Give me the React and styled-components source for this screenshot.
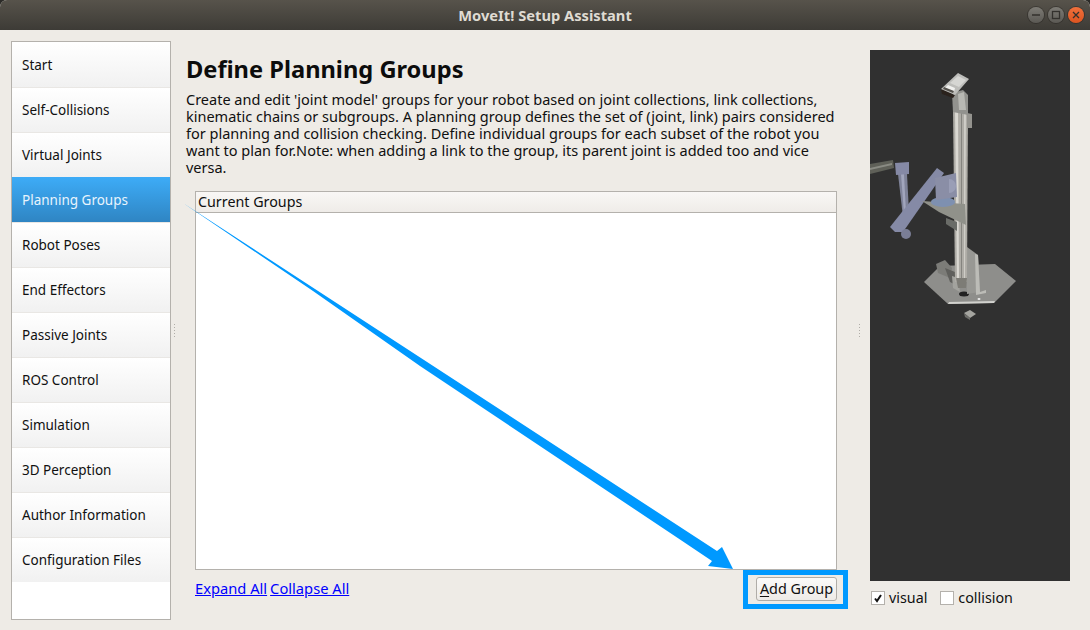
import styled, { createGlobalStyle } from "styled-components";

const GlobalStyle = createGlobalStyle`
    html, body {
        margin: 0;
        padding: 0;
        background: #2c2b28;
    }
`;

const Window = styled.div`
    position: relative;
    display: flex;
    flex-direction: column;
    width: 1090px;
    height: 630px;
    overflow: hidden;
    background: #eeebe6;
    border-radius: 7px 7px 0 0;
    font-family: "Noto Sans", sans-serif;
    font-size: 14px;
    color: #101010;
`;

const TitleBar = styled.div`
    position: relative;
    display: flex;
    flex: 0 0 30px;
    align-items: center;
    justify-content: center;
    background: linear-gradient(#57534b, #3d3b36);
    color: #dfdbd2;
    font-weight: 700;
    font-size: 14.7px;
`;

const WindowButtons = styled.div`
    position: absolute;
    top: 7px;
    right: 6px;
    display: flex;
    gap: 4px;
`;

const WindowButton = styled.div`
    display: flex;
    align-items: center;
    justify-content: center;
    width: 16px;
    height: 16px;
    border-radius: 50%;
    background: ${(p) => (p.$close ? "linear-gradient(#f0703c, #dc5420)" : "linear-gradient(#7d7b75, #5b5954)")};
    box-shadow: 0 0 0 1px rgba(40, 38, 34, 0.5);
    & svg {
        width: 10px;
        height: 10px;
        stroke: #33312d;
        stroke-width: 1.3;
        fill: none;
    }
`;

const Body = styled.div`
    display: flex;
    flex: 1;
    padding: 11px 20px 10px 11px;
    min-height: 0;
`;

const Sidebar = styled.div`
    display: flex;
    flex-direction: column;
    flex: 0 0 158px;
    background: #fff;
    border: 1px solid #b4b1ac;
`;

const NavItem = styled.div`
    display: flex;
    flex: 0 0 45px;
    box-sizing: border-box;
    align-items: center;
    padding-left: 10px;
    font-size: 13.5px;
    background: ${(p) => (p.$active ? "linear-gradient(#3dabf6, #2f85c3)" : "linear-gradient(#fff, #f1f1f1)")};
    color: ${(p) => (p.$active ? "#e8f4fd" : "#101010")};
    border-top: 1px solid ${(p) => (p.$active ? "#3dabf6" : p.$first ? "#fff" : "#e9e7e4")};
`;

const Splitter = styled.div`
    display: flex;
    flex: 0 0 ${(p) => p.$width}px;
    box-sizing: border-box;
    align-items: center;
    padding-left: ${(p) => p.$offset}px;
    &::after {
        content: "";
        width: 1px;
        height: 14px;
        background: repeating-linear-gradient(#b0ada8 0 1px, transparent 1px 3px);
    }
`;

const Main = styled.div`
    display: flex;
    flex-direction: column;
    flex: 0 0 666px;
    min-width: 0;
`;

const Heading = styled.h1`
    margin: 12px 0 5px;
    font-size: 23.65px;
    line-height: 33px;
    font-weight: 700;
    color: #0c0c0c;
`;

const Description = styled.p`
    margin: 0;
    width: 650px;
    font-size: 14.5px;
    line-height: 17px;
`;

const GroupsTable = styled.div`
    display: flex;
    flex-direction: column;
    flex: 1;
    margin: 15px 15px 0 9px;
    border: 1px solid #b4b1ac;
    background: #fff;
`;

const TableHeader = styled.div`
    flex: 0 0 21px;
    box-sizing: border-box;
    padding-left: 2px;
    font-size: 14.3px;
    line-height: 20px;
    background: linear-gradient(#f9f7f5, #efece8);
    border-bottom: 1px solid #b4b1ac;
`;

const Footer = styled.div`
    display: flex;
    flex: 0 0 50px;
    align-items: flex-start;
    justify-content: space-between;
    margin: 0 15px 0 9px;
    padding-top: 7px;
    box-sizing: border-box;
`;

const LinkRow = styled.div`
    display: flex;
    gap: 3px;
    padding-top: 1px;
    font-size: 14.7px;
    line-height: 20px;
`;

const TextLink = styled.a`
    color: #0000ff;
    text-decoration: underline;
`;

const AddButton = styled.button`
    position: relative;
    width: 81px;
    height: 24px;
    padding: 0;
    font: inherit;
    font-size: 14.4px;
    line-height: 20px;
    color: #101010;
    background: linear-gradient(#fbfaf9, #eeebe7);
    border: 1px solid #b0ada8;
    border-radius: 3px;
    &::after {
        content: "";
        position: absolute;
        top: -8px;
        bottom: -9px;
        left: -14px;
        right: -12px;
        border: 5px solid #0099ff;
    }
    & u {
        text-underline-offset: 2px;
    }
`;

const ViewerPanel = styled.div`
    display: flex;
    flex-direction: column;
    flex: 0 0 200px;
    padding-top: 9px;
`;

const Viewer = styled.div`
    flex: 0 0 531px;
    background: #303030;
    & svg {
        display: block;
    }
`;

const ViewOptions = styled.div`
    display: flex;
    align-items: center;
    margin-top: 10px;
    padding-left: 1px;
    font-size: 14.3px;
    line-height: 14px;
`;

const Option = styled.label`
    display: flex;
    align-items: center;
    gap: 4px;
    margin-right: 13px;
`;

const CheckBox = styled.span`
    display: flex;
    align-items: center;
    justify-content: center;
    box-sizing: border-box;
    width: 14px;
    height: 14px;
    background: #fff;
    border: 1px solid #b4b1ac;
    & svg {
        width: 10px;
        height: 10px;
        stroke: #111;
        stroke-width: 2;
        fill: none;
    }
`;

const ArrowOverlay = styled.svg`
    position: absolute;
    left: 0;
    top: 0;
    pointer-events: none;
`;

const navItems = [
    "Start", "Self-Collisions", "Virtual Joints", "Planning Groups", "Robot Poses", "End Effectors",
    "Passive Joints", "ROS Control", "Simulation", "3D Perception", "Author Information", "Configuration Files",
];

// robot model in the 3D view, in page coordinates
const RobotDrawing = () => (
    <svg width="200" height="531" viewBox="870 50 200 531">
        <defs>
            <filter id="soft" x="-5%" y="-5%" width="110%" height="110%">
                <feGaussianBlur stdDeviation="0.45" />
            </filter>
        </defs>
        <g filter="url(#soft)">
            {/* base plate */}
            <polygon points="924,282 940,266 995,264 1016,281 994,303 948,304" fill="#8e8e8b" />
            <polygon points="948,304 994,303 995,301 949,302" fill="#d2d2ce" />
            <ellipse cx="964" cy="294" rx="5" ry="2.5" fill="#232220" />
            <ellipse cx="979" cy="299" rx="1.5" ry="1" fill="#eee" />
            {/* motor */}
            <polygon points="936,264 945,260 952,268 950,278 938,273" fill="#7c7c78" />
            <polygon points="945,268 955,272 956,285 950,282" fill="#5f5f5b" />
            <polygon points="952,276 958,278 960,292 953,288" fill="#a3a39e" />
            {/* gusset */}
            <polygon points="967,247 978,255 980,292 967,294" fill="#989894" />
            <polygon points="975,254 978,255 980,292 986,290 986,293 976,295" fill="#bcbcb7" />
            {/* column */}
            <polygon points="953,108 968,108 967,282 955,282" fill="#aeaca6" />
            <polygon points="955,108 958,108 959,282 957,282" fill="#dad8d2" />
            <polygon points="961,108 962,108 962,282 961,282" fill="#85847f" />
            <polygon points="964,108 966,108 965,282 964,282" fill="#cfcdc7" />
            <polygon points="956,278 967,278 966,288 958,288" fill="#7d7c76" />
            <polygon points="967,113 972,114 972,128 967,128" fill="#94938e" />
            {/* head bracket and camera */}
            <polygon points="952,93 963,90 968,95 968,115 953,112" fill="#92928e" />
            <polygon points="958,94 964,92 966,110 959,110" fill="#b8b8b3" />
            <polygon points="941,89 955,95 953,98 942,94" fill="#2a211c" />
            <polygon points="958,73 969,79 955,95 941,89" fill="#bdbdba" />
            <polygon points="948,85 955,88 954,92 945,88" fill="#f1f1ef" />
            <polygon points="958,76 966,80 959,87 950,83" fill="#d6d6d3" />
            <polygon points="944,87 954,91 953,93 943,89" fill="#55524e" />
            {/* arm */}
            <polygon points="870,164 893,160 894,168 870,174" fill="#5e6059" />
            <polygon points="870,168 892,163 892,165 870,170" fill="#8a8b83" />
            <polygon points="898,174 907,174 909,213 903,217" fill="#7f8399" />
            <polygon points="901,174 904,174 906,213 904,214" fill="#a1a5bc" />
            <polygon points="895,163 909,162 909,174 896,175" fill="#8589a5" />
            <polygon points="937,168 944,173 903,232 895,232 890,227" fill="#858aa6" />
            <circle cx="906" cy="234" r="5" fill="#7a7e96" />
            {/* shelf and shoulder */}
            <polygon points="946,218 957,222 957,231 946,224" fill="#6b6c68" />
            <polygon points="922,201 965,204 966,225 939,212" fill="#90918a" />
            <ellipse cx="943" cy="202" rx="12" ry="5" fill="#7e90b0" />
            <polygon points="935,178 956,173 957,197 936,200" fill="#8a8ea6" />
            <path d="M949 179a7 7 0 0 1 0 14z" fill="#9a9eb6" />
            {/* loose part on the floor */}
            <polygon points="964,313 970,310 976,314 970,318" fill="#a5a5a0" />
            <polygon points="964,313 970,318 970,320 965,317" fill="#6e6e6a" />
        </g>
    </svg>
);

const App = () => {
    return (
        <Window>
            <GlobalStyle />
            <TitleBar>
                MoveIt! Setup Assistant
                <WindowButtons>
                    <WindowButton>
                        <svg viewBox="0 0 10 10"><path d="M1 5h8" /></svg>
                    </WindowButton>
                    <WindowButton>
                        <svg viewBox="0 0 10 10"><rect x="1.5" y="1.5" width="7" height="7" /></svg>
                    </WindowButton>
                    <WindowButton $close>
                        <svg viewBox="0 0 10 10"><path d="M2 2l6 6M8 2l-6 6" /></svg>
                    </WindowButton>
                </WindowButtons>
            </TitleBar>
            <Body>
                <Sidebar>
                    {navItems.map((item, i) => (
                        <NavItem key={item} $first={i === 0} $active={item === "Planning Groups"}>{item}</NavItem>
                    ))}
                </Sidebar>
                <Splitter $width={15} $offset={3} />
                <Main>
                    <Heading>Define Planning Groups</Heading>
                    <Description>
                        Create and edit 'joint model' groups for your robot based on joint collections, link collections,
                        kinematic chains or subgroups. A planning group defines the set of (joint, link) pairs considered
                        for planning and collision checking. Define individual groups for each subset of the robot you
                        want to plan for.Note: when adding a link to the group, its parent joint is added too and vice
                        versa.
                    </Description>
                    <GroupsTable>
                        <TableHeader>Current Groups</TableHeader>
                    </GroupsTable>
                    <Footer>
                        <LinkRow>
                            <TextLink href="#">Expand All</TextLink>
                            <TextLink href="#">Collapse All</TextLink>
                        </LinkRow>
                        <AddButton><u>A</u>dd Group</AddButton>
                    </Footer>
                </Main>
                <Splitter $width={18} $offset={7} />
                <ViewerPanel>
                    <Viewer>
                        <RobotDrawing />
                    </Viewer>
                    <ViewOptions>
                        <Option>
                            <CheckBox>
                                <svg viewBox="0 0 10 10"><path d="M2 5.5l2 2.5 4-6" /></svg>
                            </CheckBox>
                            visual
                        </Option>
                        <Option>
                            <CheckBox />
                            collision
                        </Option>
                    </ViewOptions>
                </ViewerPanel>
            </Body>
            <ArrowOverlay width="1090" height="630">
                <polygon points="183,203 717,551 722,547 733,569 708,566 712,561 680,539.5 420,366 313,291" fill="#0099ff" />
            </ArrowOverlay>
        </Window>
    );
};

export default App;
